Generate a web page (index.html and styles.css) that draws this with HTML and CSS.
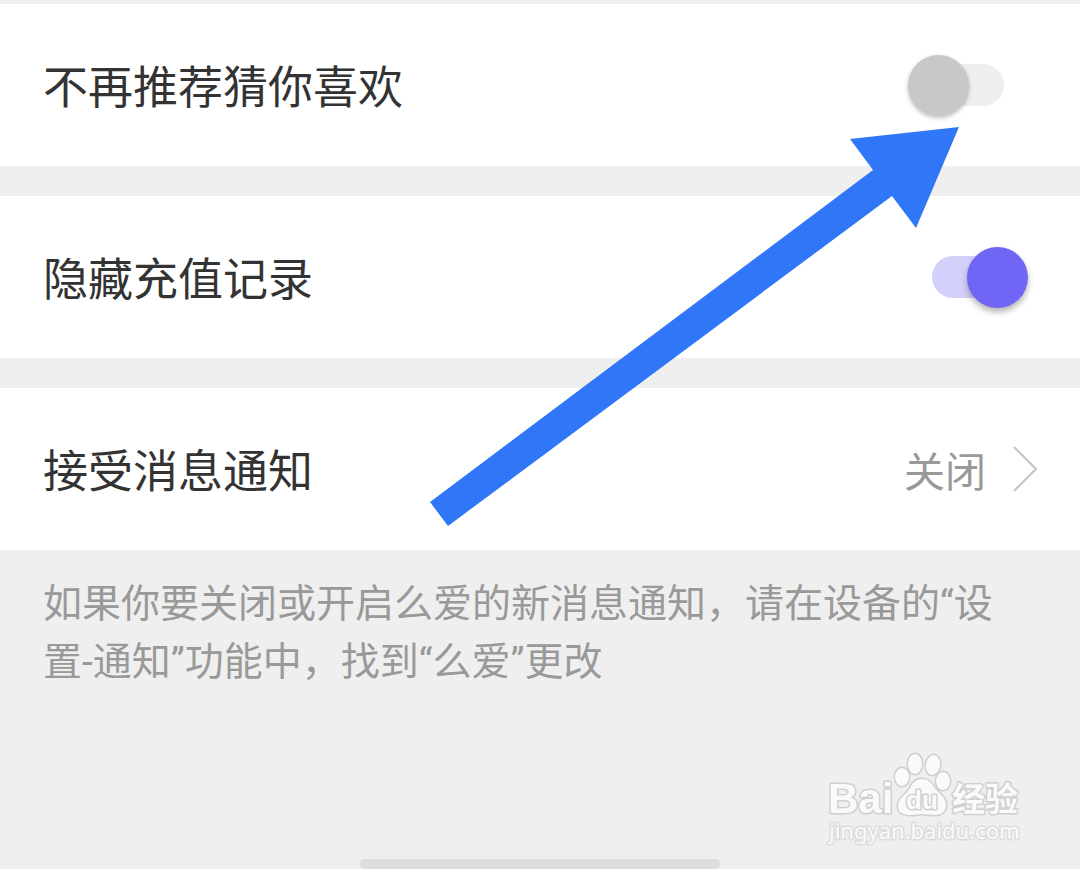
FILE: index.html
```html
<!DOCTYPE html>
<html lang="zh-CN">
<head>
<meta charset="utf-8">
<meta name="viewport" content="width=device-width, initial-scale=1">
<title>设置</title>
<link rel="stylesheet" href="styles.css">
</head>
<body>
<main class="settings">
  <div class="row">
    <label class="row-label" for="recommend">不再推荐猜你喜欢</label>
    <input class="switch" type="checkbox" role="switch" id="recommend">
  </div>
  <div class="row">
    <label class="row-label" for="recharge">隐藏充值记录</label>
    <input class="switch" type="checkbox" role="switch" id="recharge" checked>
  </div>
  <button class="row row-link" type="button">
    <span class="row-label">接受消息通知</span>
    <span class="row-value">关闭</span>
    <svg class="chevron" viewBox="0 0 26 48" aria-hidden="true"><path d="M2 2 24 24 2 46"/></svg>
  </button>
</main>
<p class="note">如果你要关闭或开启么爱的新消息通知，请在设备的“设置-通知”功能中，找到“么爱”更改</p>
<div class="home-bar"></div>
<svg class="arrow" viewBox="0 0 530 400" aria-hidden="true"><path d="M529 1 486 102 462 70 18 400 0 376 443 44 420 13Z"/></svg>
<svg class="watermark" viewBox="0 0 210 105" role="img" aria-label="Baidu 经验">
  <text class="mark-latin" x="8" y="68">Bai</text>
  <g class="paw">
    <ellipse cx="82" cy="32" rx="7" ry="9"/>
    <ellipse cx="95" cy="19" rx="7" ry="10"/>
    <ellipse cx="113" cy="20" rx="7" ry="10" transform="rotate(10 113 20)"/>
    <ellipse cx="123" cy="36" rx="7" ry="9"/>
    <path d="M102 34c-6 0-10 4-12 9-3 6-12 10-12 18 0 7 6 9 12 9 5 0 8-1 12-1s8 1 13 1c6 0 11-3 11-10 0-8-8-12-12-18-3-5-6-8-12-8Z"/>
  </g>
  <text class="mark-du" x="86" y="64">du</text>
  <text class="mark-cjk" x="132" y="66">经验</text>
  <text class="mark-url" x="9" y="94">jingyan.baidu.com</text>
</svg>
</body>
</html>
```
FILE: styles.css
```css
* {
  box-sizing: border-box;
}

body {
  position: relative;
  display: flex;
  flex-direction: column;
  min-height: 100vh;
  margin: 0;
  padding-top: 4px;
  overflow-x: hidden;
  background: #efefef;
  color: #333;
  font-family: Roboto, "Noto Sans CJK SC", sans-serif;
}

.settings {
  display: flex;
  flex-direction: column;
  gap: 30px;
}

.row {
  display: flex;
  align-items: center;
  width: 100%;
  padding: 44px 52px 44px 43px;
  border: 0;
  background: #fff;
  color: inherit;
  font: inherit;
  font-size: 45px;
  line-height: 66px;
  text-align: left;
}

.row-link {
  padding-right: 42px;
}

.row-label {
  flex: 1;
  padding-top: 8px;
}

.row-value {
  margin-right: 26px;
  padding-top: 8px;
  color: #999;
  font-size: 41px;
}

.chevron {
  width: 26px;
  height: 48px;
  fill: none;
  stroke: #c4c4c4;
  stroke-width: 2;
}

.switch {
  appearance: none;
  position: relative;
  display: flex;
  align-items: center;
  width: 120px;
  height: 62px;
  margin: 0;
}

.switch::before {
  content: "";
  width: 72px;
  height: 42px;
  margin: 0 24px;
  border-radius: 21px;
  background: #efefef;
}

.switch::after {
  content: "";
  position: absolute;
  left: 0;
  width: 61px;
  height: 61px;
  border-radius: 50%;
  background: #c8c8c8;
  box-shadow: 0 2px 4px rgba(0, 0, 0, 0.25);
}

.switch:checked::before {
  background: #d4d0fc;
}

.switch:checked::after {
  right: 0;
  left: auto;
  background: #7065f4;
  box-shadow: 0 4px 6px rgba(0, 0, 0, 0.3);
}

.note {
  margin: 0;
  padding: 25px 43px;
  color: #999;
  font-size: 39px;
  line-height: 58px;
}

.home-bar {
  width: 360px;
  height: 10px;
  margin: auto auto 0;
  border-radius: 5px;
  background: #ddd;
}

.arrow {
  position: absolute;
  top: 126px;
  left: 430px;
  width: 530px;
  height: 400px;
  fill: #2f77f6;
  pointer-events: none;
}

.watermark {
  position: absolute;
  right: 50px;
  bottom: 19px;
  width: 210px;
  height: 105px;
  fill: #fafafa;
  stroke: #cfcfcf;
  stroke-width: 3;
  stroke-linejoin: round;
  paint-order: stroke;
}

.mark-latin {
  font: bold 42px "Liberation Sans", sans-serif;
}

.mark-du {
  font: bold 26px "Liberation Sans", sans-serif;
}

.mark-cjk {
  font: bold 33px "Noto Sans CJK SC", sans-serif;
}

.mark-url {
  stroke: #dcdcdc;
  font: 22px "Noto Sans", sans-serif;
}
```
